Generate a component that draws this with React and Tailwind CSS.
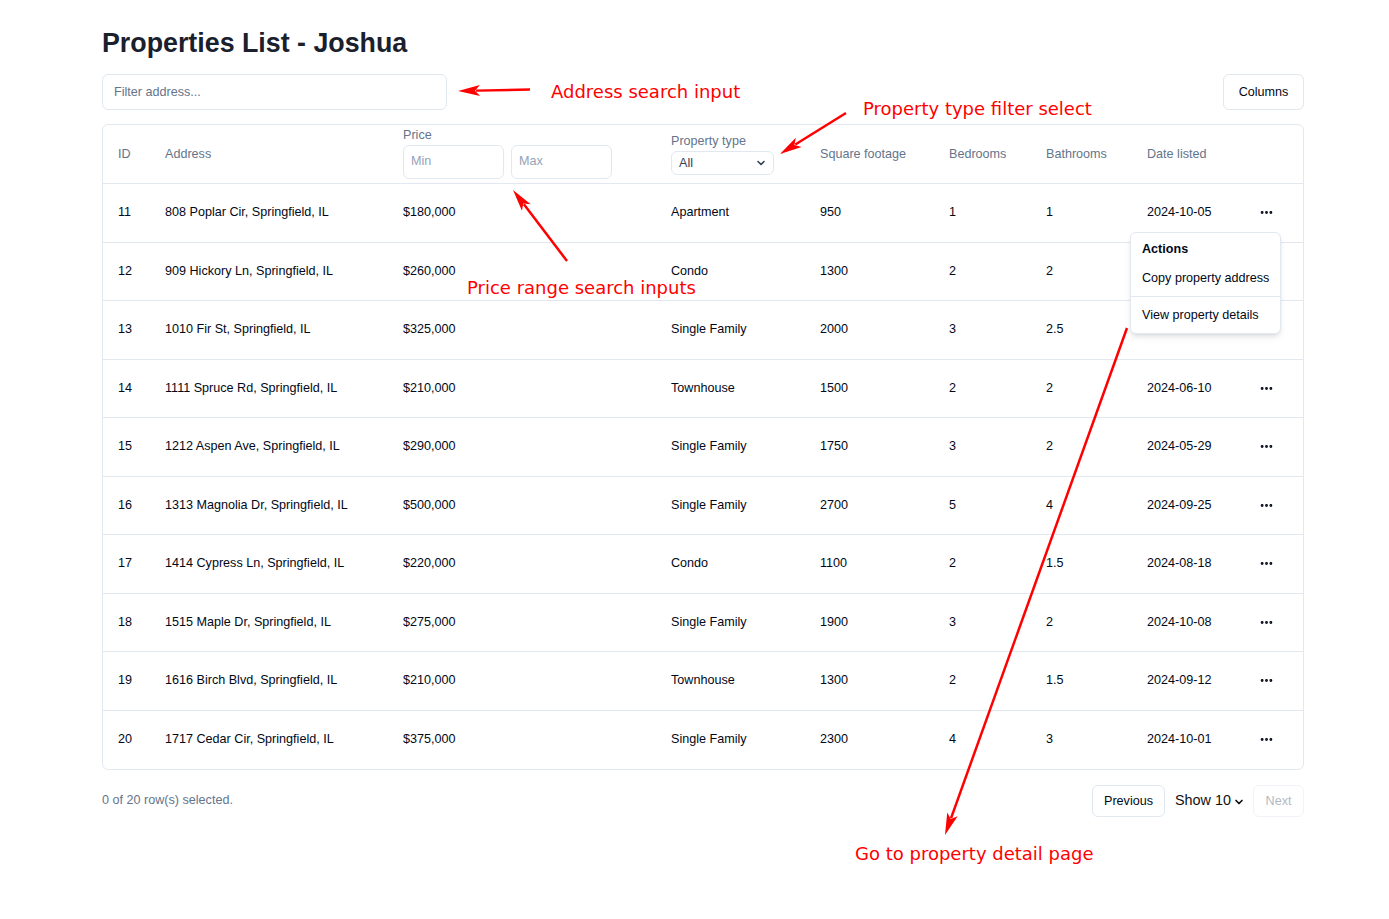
import { ChevronDown, MoreHorizontal } from 'lucide-react'

const rows = [
  { id: 11, address: '808 Poplar Cir, Springfield, IL', price: '$180,000', type: 'Apartment', sqft: 950, bed: 1, bath: 1, date: '2024-10-05' },
  { id: 12, address: '909 Hickory Ln, Springfield, IL', price: '$260,000', type: 'Condo', sqft: 1300, bed: 2, bath: 2, date: '', covered: true },
  { id: 13, address: '1010 Fir St, Springfield, IL', price: '$325,000', type: 'Single Family', sqft: 2000, bed: 3, bath: 2.5, date: '', covered: true },
  { id: 14, address: '1111 Spruce Rd, Springfield, IL', price: '$210,000', type: 'Townhouse', sqft: 1500, bed: 2, bath: 2, date: '2024-06-10' },
  { id: 15, address: '1212 Aspen Ave, Springfield, IL', price: '$290,000', type: 'Single Family', sqft: 1750, bed: 3, bath: 2, date: '2024-05-29' },
  { id: 16, address: '1313 Magnolia Dr, Springfield, IL', price: '$500,000', type: 'Single Family', sqft: 2700, bed: 5, bath: 4, date: '2024-09-25' },
  { id: 17, address: '1414 Cypress Ln, Springfield, IL', price: '$220,000', type: 'Condo', sqft: 1100, bed: 2, bath: 1.5, date: '2024-08-18' },
  { id: 18, address: '1515 Maple Dr, Springfield, IL', price: '$275,000', type: 'Single Family', sqft: 1900, bed: 3, bath: 2, date: '2024-10-08' },
  { id: 19, address: '1616 Birch Blvd, Springfield, IL', price: '$210,000', type: 'Townhouse', sqft: 1300, bed: 2, bath: 1.5, date: '2024-09-12' },
  { id: 20, address: '1717 Cedar Cir, Springfield, IL', price: '$375,000', type: 'Single Family', sqft: 2300, bed: 4, bath: 3, date: '2024-10-01' },
]

const cols = 'grid grid-cols-[47px_238px_268px_149px_129px_97px_101px_105px_1fr]'

function Arrow({ x1, y1, x2, y2 }) {
  const dx = x2 - x1
  const dy = y2 - y1
  const len = Math.hypot(dx, dy)
  const ux = dx / len
  const uy = dy / len
  const bx = x2 - ux * 22
  const by = y2 - uy * 22
  const px = -uy * 5.5
  const py = ux * 5.5
  return (
    <g>
      <line x1={x1} y1={y1} x2={bx + ux * 4} y2={by + uy * 4} stroke="#ff0000" strokeWidth="2.5" />
      <polygon
        points={`${x2},${y2} ${bx + px},${by + py} ${bx + ux * 5},${by + uy * 5} ${bx - px},${by - py}`}
        fill="#ff0000"
      />
    </g>
  )
}

function Note({ className, children }) {
  return (
    <div
      className={`absolute whitespace-nowrap text-[18px] leading-none text-[#ff0000] ${className}`}
      style={{ fontFamily: '"DejaVu Sans", Verdana, sans-serif' }}
    >
      {children}
    </div>
  )
}

export default function App() {
  return (
    <div
      className="relative min-h-[919px] w-[1389px] bg-white text-[#020817]"
      style={{ fontFamily: '"Liberation Sans", Arial, sans-serif' }}
    >
      <div className="w-[1202px] ml-[102px] pt-[27px]">
        <h1 className="text-[26.8px] font-bold leading-[1.2] text-[#1a202c] mb-[15px]">Properties List - Joshua</h1>

        <div className="flex items-center justify-between">
          <div className="w-[345px] h-[36px] rounded-md border border-[#e2e8f0] flex items-center px-[11px] text-[12.6px] text-[#64748b]">
            Filter address...
          </div>
          <button className="h-[36px] w-[81px] rounded-md border border-[#e2e8f0] text-[12.6px] text-[#020817] bg-white">
            Columns
          </button>
        </div>

        <div className="relative mt-[14px] rounded-md border border-[#e2e8f0] text-[12.6px]">
          <div className={`${cols} h-[59px] border-b border-[#e2e8f0] text-[#64748b]`}>
            <div className="pl-[15px] self-center">ID</div>
            <div className="pl-[15px] self-center">Address</div>
            <div className="pl-[15px] self-center flex flex-col mb-[2px]">
              <span className="leading-[14px]">Price</span>
              <div className="flex gap-[7px] mt-[3px]">
                <div className="w-[101px] h-[34px] rounded-md border border-[#e2e8f0] flex items-center pl-[7px] text-[#94a3b8]">Min</div>
                <div className="w-[101px] h-[34px] rounded-md border border-[#e2e8f0] flex items-center pl-[7px] text-[#94a3b8]">Max</div>
              </div>
            </div>
            <div className="pl-[15px] self-center flex flex-col mt-[1px]">
              <span className="leading-[14px]">Property type</span>
              <div className="mt-[3px] w-[103px] h-[24px] rounded-md border border-[#e2e8f0] flex items-center justify-between pl-[7px] pr-[6px] text-[#334155]">
                <span>All</span>
                <ChevronDown size={12} strokeWidth={3.2} className="text-[#334155]" />
              </div>
            </div>
            <div className="pl-[15px] self-center">Square footage</div>
            <div className="pl-[15px] self-center">Bedrooms</div>
            <div className="pl-[15px] self-center">Bathrooms</div>
            <div className="pl-[15px] self-center">Date listed</div>
            <div />
          </div>

          {rows.map((r, i) => (
            <div
              key={r.id}
              className={`${cols} items-center h-[58.5px] ${i < rows.length - 1 ? 'border-b border-[#e2e8f0]' : ''}`}
            >
              <div className="pl-[15px]">{r.id}</div>
              <div className="pl-[15px]">{r.address}</div>
              <div className="pl-[15px]">{r.price}</div>
              <div className="pl-[15px]">{r.type}</div>
              <div className="pl-[15px]">{r.sqft}</div>
              <div className="pl-[15px]">{r.bed}</div>
              <div className="pl-[15px]">{r.bath}</div>
              <div className="pl-[15px]">{r.date}</div>
              <div className="pl-[15px]">
                {!r.covered && (
                  <button className="w-[29px] h-[29px] flex items-center justify-center rounded-md">
                    <MoreHorizontal size={15} strokeWidth={2.6} />
                  </button>
                )}
              </div>
            </div>
          ))}

          <div className="absolute left-[1027px] top-[107px] w-[151px] rounded-md border border-[#e2e8f0] bg-white shadow-md p-[4px] text-[12.6px] whitespace-nowrap">
            <div className="h-[24px] flex items-center px-[7px] font-bold">Actions</div>
            <div className="mt-[3px] h-[28px] flex items-center px-[7px]">Copy property address</div>
            <div className="-mx-[4px] my-[4px] h-px bg-[#e2e8f0]" />
            <div className="h-[28px] flex items-center px-[7px]">View property details</div>
          </div>
        </div>

        <div className="mt-[15px] flex items-center justify-between">
          <span className="text-[12.6px] text-[#64748b] -mt-[2px]">0 of 20 row(s) selected.</span>
          <div className="flex items-center">
            <button className="h-[32px] w-[73px] rounded-md border border-[#e2e8f0] text-[12.6px] bg-white">Previous</button>
            <div className="ml-[10px] flex items-center text-[14.4px] text-[#111]">
              <span>Show 10</span>
              <ChevronDown size={12} strokeWidth={3.4} className="ml-[2px] mt-[1px]" />
            </div>
            <button className="ml-[8px] h-[32px] w-[51px] rounded-md border border-[#e2e8f0] text-[12.6px] bg-white opacity-50 text-[#64748b]">Next</button>
          </div>
        </div>
      </div>

      <svg className="absolute left-0 top-0 pointer-events-none" width="1389" height="919">
        <Arrow x1={530} y1={89.5} x2={458} y2={91} />
        <Arrow x1={846} y1={113} x2={780} y2={154} />
        <Arrow x1={567} y1={261} x2={513} y2={190} />
        <Arrow x1={1127} y1={328} x2={945} y2={835} />
      </svg>

      <Note className="left-[551px] top-[83px]">Address search input</Note>
      <Note className="left-[863px] top-[100px]">Property type filter select</Note>
      <Note className="left-[467px] top-[279px]">Price range search inputs</Note>
      <Note className="left-[855px] top-[845px]">Go to property detail page</Note>
    </div>
  )
}
